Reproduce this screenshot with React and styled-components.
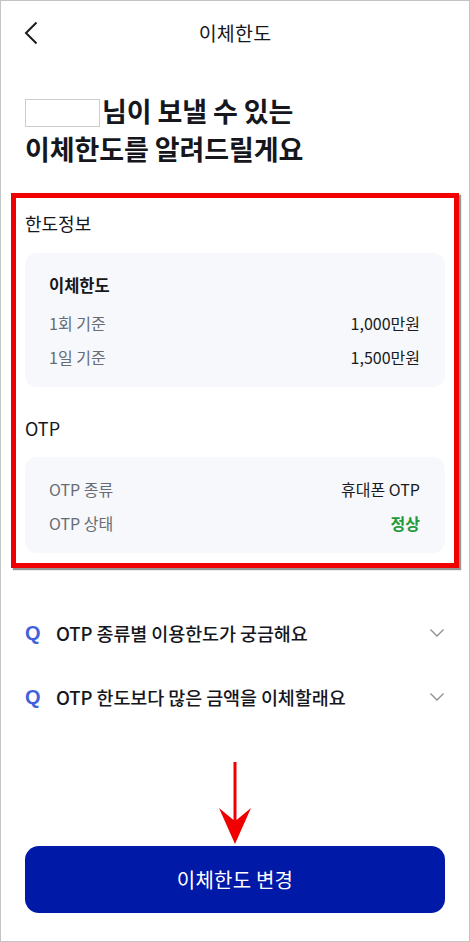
import React from 'react';
import styled, { createGlobalStyle } from 'styled-components';

const GlobalStyle = createGlobalStyle`
	* { box-sizing: border-box; }
	html, body { margin: 0; padding: 0; background: #fff; }
	body {
		font-family: "Noto Sans CJK KR", "Noto Sans", sans-serif;
		color: #16171c;
	}
`;

const Frame = styled.div`
	width: 470px;
	height: 942px;
	border: 1px solid #c4c4c4;
	background: #fff;
	display: flex;
	flex-direction: column;
	padding: 0 24px;
	overflow: hidden;
`;

const Header = styled.header`
	height: 63px;
	display: flex;
	align-items: center;
	justify-content: center;
	position: relative;
	margin: 0 -24px;
`;

const BackButton = styled.button`
	position: absolute;
	left: 20px;
	top: 18px;
	width: 20px;
	height: 28px;
	padding: 0;
	border: 0;
	background: none;
	display: flex;
	align-items: center;
	justify-content: center;
`;

const Title = styled.h1`
	margin: 0;
	font-size: 19.5px;
	font-weight: 400;
	letter-spacing: 0.2px;
`;

const Headline = styled.h2`
	margin: 28px 0 0;
	font-size: 27px;
	font-weight: 700;
	line-height: 38px;
	letter-spacing: -0.1px;
`;

const NameBox = styled.span`
	display: inline-block;
	width: 75px;
	height: 28px;
	border: 1px solid #cdcdcd;
	vertical-align: -5px;
	margin-right: 2px;
`;

const Highlight = styled.section`
	margin: 25px -14px 0;
	border: 5px solid #f00000;
	box-shadow: 2px 2px 1px rgba(60, 60, 60, 0.55);
	padding: 13px 9px 10px;
`;

const SectionLabel = styled.div`
	font-size: 18px;
	line-height: 24px;
	margin-top: ${p => p.$gap || 0}px;
`;

const Card = styled.div`
	margin-top: ${p => p.$gap}px;
	background: #f6f8fb;
	border-radius: 12px;
	padding: 20px 25px 18px 24px;
	display: flex;
	flex-direction: column;
	gap: 10px;
`;

const CardTitle = styled.div`
	font-size: 16.5px;
	font-weight: 700;
	line-height: 24px;
	margin-bottom: 4px;
`;

const Row = styled.div`
	display: flex;
	justify-content: space-between;
	align-items: center;
	font-size: 16px;
	line-height: 24px;
`;

const Key = styled.span`
	color: #686c74;
`;

const Value = styled.span`
	color: ${p => (p.$ok ? '#1f9a3c' : '#1a1b20')};
	font-weight: ${p => (p.$ok ? 700 : 400)};
`;

const Faq = styled.div`
	margin-top: 33px;
	display: flex;
	flex-direction: column;
`;

const FaqRow = styled.div`
	height: 64px;
	display: flex;
	align-items: center;
`;

const Q = styled.span`
	width: 31px;
	font-family: "Liberation Sans", Arial, sans-serif;
	font-size: 20px;
	font-weight: 700;
	color: #4262dc;
`;

const Question = styled.span`
	flex: 1;
	font-size: 18.5px;
	font-weight: 500;
	letter-spacing: -0.1px;
`;

const Arrow = styled.div`
	margin-top: 33px;
	display: flex;
	justify-content: center;
	height: 82px;
`;

const Submit = styled.button`
	margin-top: 2px;
	height: 67px;
	border: 0;
	border-radius: 14px;
	background: #0019a6;
	color: #fff;
	font-family: inherit;
	font-size: 20px;
	font-weight: 400;
	letter-spacing: 0.2px;
`;

const Chevron = () => (
	<svg width="16" height="10" viewBox="0 0 16 10" fill="none">
		<path d="M1.5 1.5 L8 8 L14.5 1.5" stroke="#8a8d93" strokeWidth="1.3" />
	</svg>
);

const faqs = ['OTP 종류별 이용한도가 궁금해요', 'OTP 한도보다 많은 금액을 이체할래요'];

export default function App() {
	return (
		<>
			<GlobalStyle />
			<Frame>
				<Header>
					<BackButton aria-label="뒤로">
						<svg width="14" height="24" viewBox="0 0 14 24" fill="none">
							<path d="M12.5 1.5 L2 12 L12.5 22.5" stroke="#1b1c22" strokeWidth="2" />
						</svg>
					</BackButton>
					<Title>이체한도</Title>
				</Header>

				<Headline>
					<NameBox />님이 보낼 수 있는<br />
					이체한도를 알려드릴게요
				</Headline>

				<Highlight>
					<SectionLabel>한도정보</SectionLabel>
					<Card $gap={18}>
						<CardTitle>이체한도</CardTitle>
						<Row><Key>1회 기준</Key><Value>1,000만원</Value></Row>
						<Row><Key>1일 기준</Key><Value>1,500만원</Value></Row>
					</Card>

					<SectionLabel $gap={29}>OTP</SectionLabel>
					<Card $gap={17}>
						<Row><Key>OTP 종류</Key><Value>휴대폰 OTP</Value></Row>
						<Row><Key>OTP 상태</Key><Value $ok>정상</Value></Row>
					</Card>
				</Highlight>

				<Faq>
					{faqs.map(q => (
						<FaqRow key={q}>
							<Q>Q</Q>
							<Question>{q}</Question>
							<Chevron />
						</FaqRow>
					))}
				</Faq>

				<Arrow>
					<svg width="34" height="82" viewBox="0 0 34 82">
						<path d="M15.5 0 H18.5 V58 L33 46 L17 82 L1 46 L15.5 58 Z" fill="#f00000" />
					</svg>
				</Arrow>

				<Submit>이체한도 변경</Submit>
			</Frame>
		</>
	);
}
